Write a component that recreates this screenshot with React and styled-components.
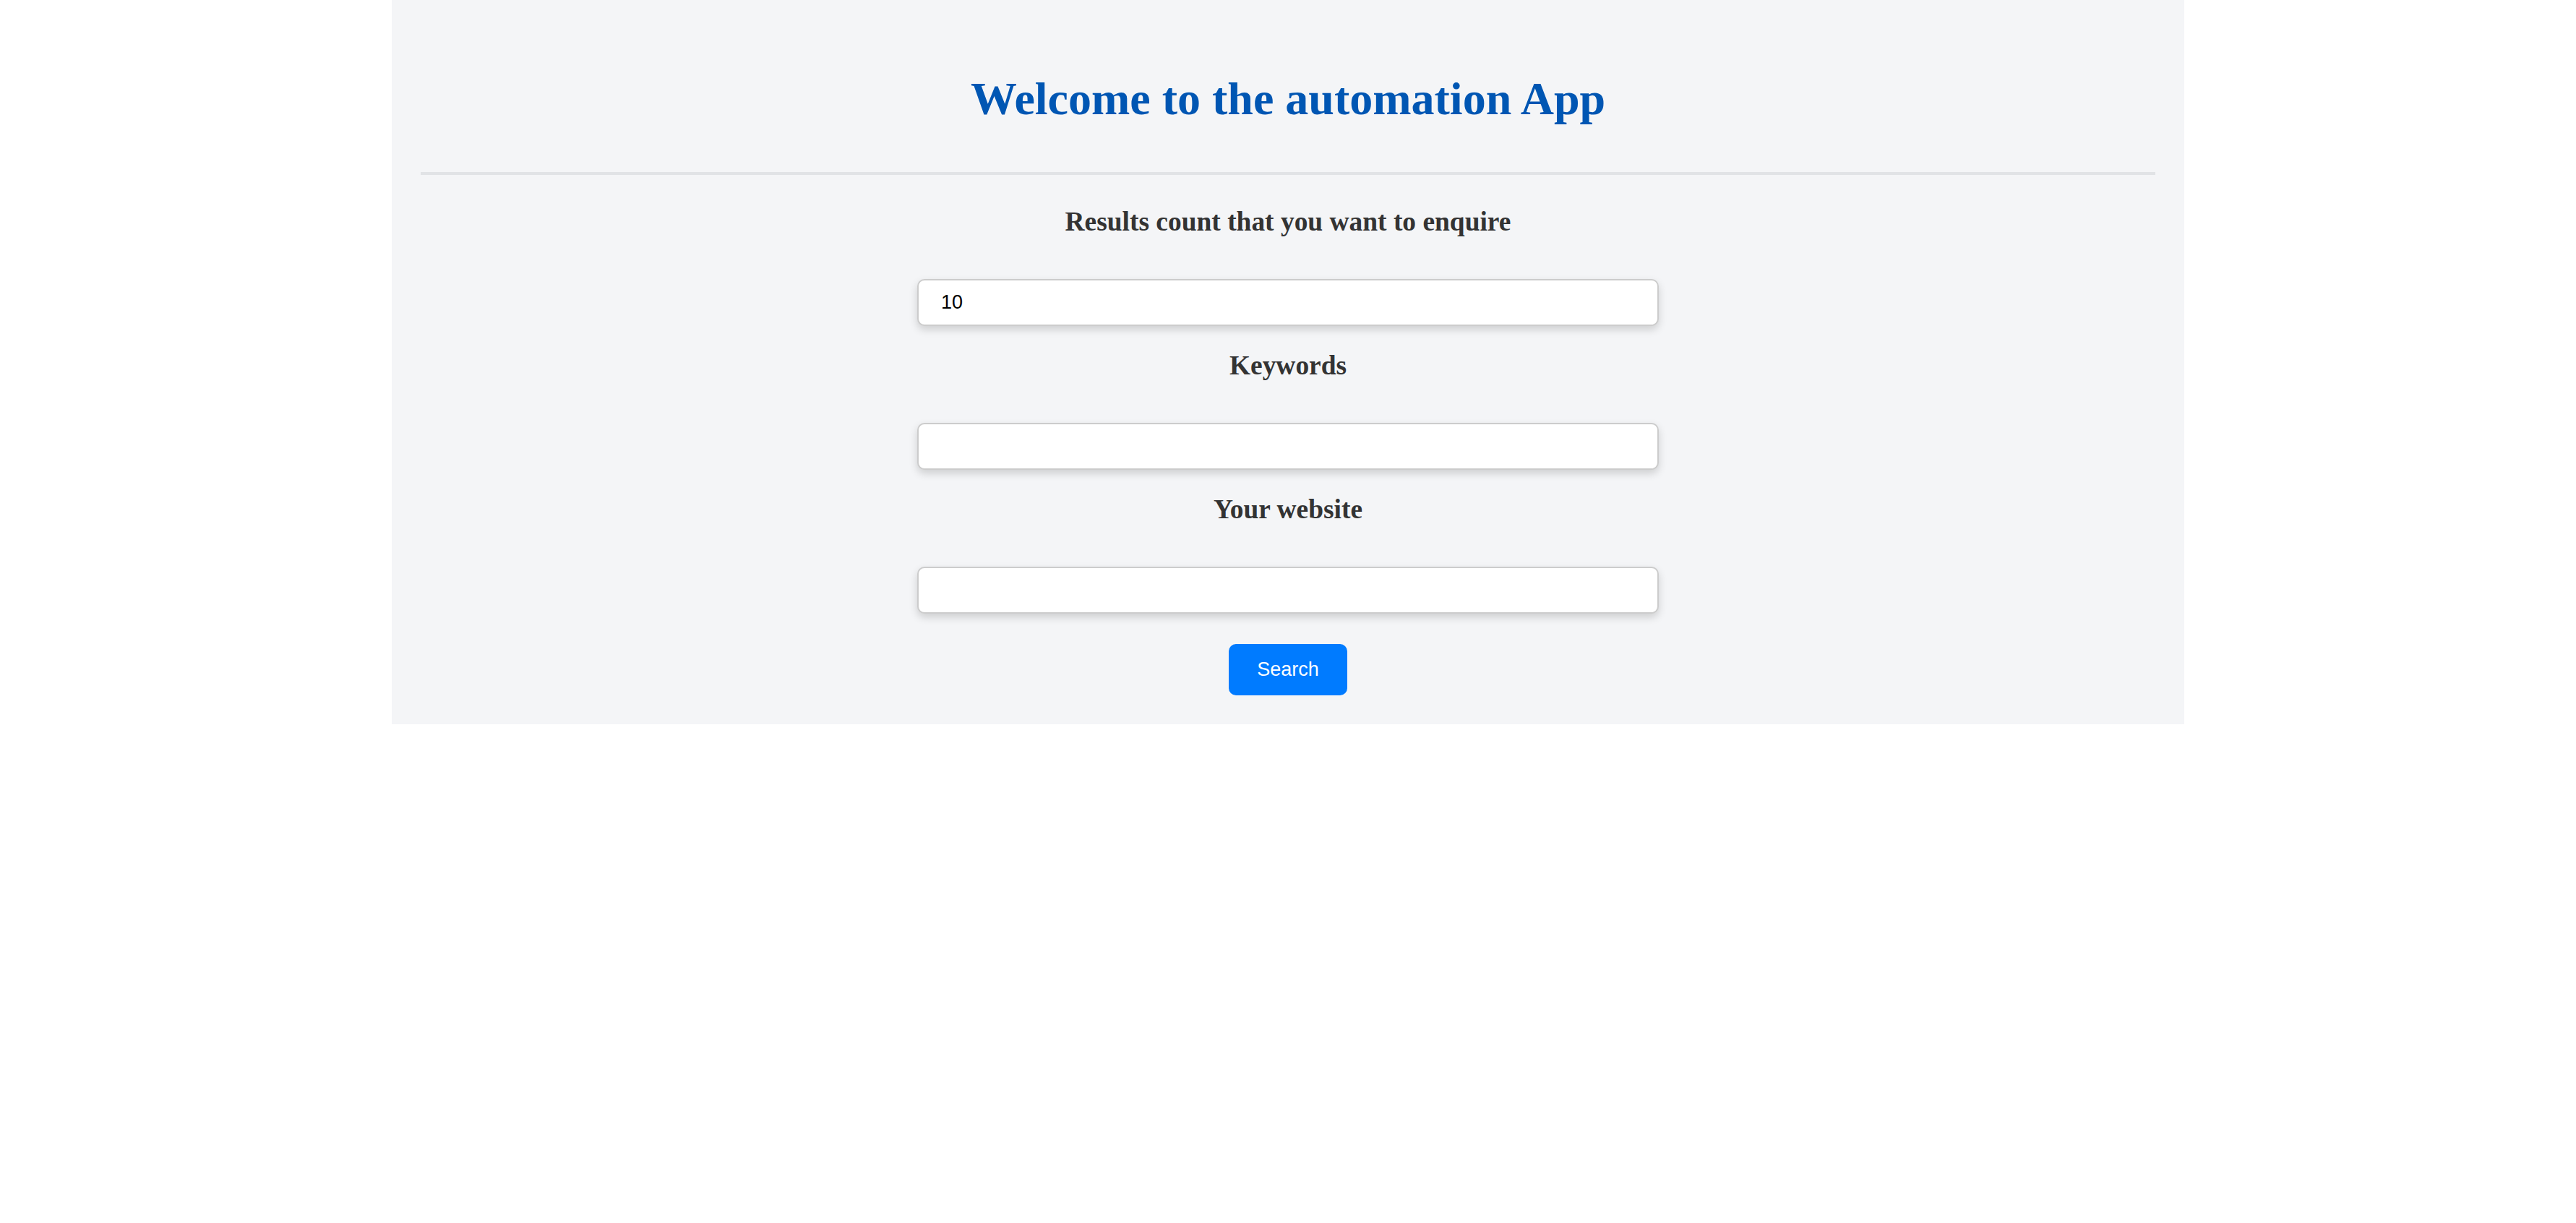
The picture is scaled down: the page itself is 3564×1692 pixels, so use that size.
import React, { useState } from "react";
import styled, { createGlobalStyle } from "styled-components";

const GlobalStyle = createGlobalStyle`
  html, body {
    margin: 0;
    padding: 0;
    background: #ffffff;
  }
`;

const Panel = styled.div`
  width: 2480px;
  margin: 0 auto;
  box-sizing: border-box;
  padding: 40px 40px 40px;
  background-color: #f4f5f7;
  display: flex;
  flex-direction: column;
  align-items: center;
`;

const Title = styled.h1`
  margin: 60px 0 64px;
  font-family: "Liberation Serif", "Times New Roman", serif;
  font-size: 64px;
  line-height: 74px;
  font-weight: bold;
  color: #0056b3;
  text-align: center;
`;

const Divider = styled.hr`
  align-self: stretch;
  height: 4px;
  margin: 0 0 10px;
  border: none;
  background-color: #e1e3e6;
`;

const Label = styled.h3`
  margin: 33px 0 58px;
  font-family: "Liberation Serif", "Times New Roman", serif;
  font-size: 37.44px;
  line-height: 43px;
  font-weight: bold;
  color: #333333;
  text-align: center;
`;

const Field = styled.input`
  width: 1026px;
  height: 65px;
  box-sizing: border-box;
  padding: 0 31px;
  border: 2px solid #cccccc;
  border-radius: 10px;
  background: #ffffff;
  box-shadow: 0 5px 12px rgba(0, 0, 0, 0.16);
  font-family: "Liberation Sans", Arial, sans-serif;
  font-size: 27px;
  color: #000000;
  outline: none;
`;

const Button = styled.button`
  margin-top: 42px;
  width: 164px;
  height: 71px;
  border: none;
  border-radius: 10px;
  background-color: #007bff;
  color: #ffffff;
  font-family: "Liberation Sans", Arial, sans-serif;
  font-size: 27px;
  cursor: pointer;
`;

const App = () => {
  const [count, setCount] = useState("10");
  const [keywords, setKeywords] = useState("");
  const [website, setWebsite] = useState("");

  return (
    <>
      <GlobalStyle />
      <Panel>
        <Title>Welcome to the automation App</Title>
        <Divider />
        <Label>Results count that you want to enquire</Label>
        <Field value={count} onChange={(e) => setCount(e.target.value)} />
        <Label>Keywords</Label>
        <Field value={keywords} onChange={(e) => setKeywords(e.target.value)} />
        <Label>Your website</Label>
        <Field value={website} onChange={(e) => setWebsite(e.target.value)} />
        <Button>Search</Button>
      </Panel>
    </>
  );
};

export default App;
